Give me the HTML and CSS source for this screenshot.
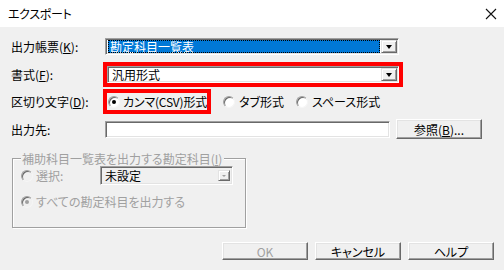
FILE: index.html
```html
<!DOCTYPE html>
<html lang="ja">
<head>
<meta charset="utf-8">
<link rel="stylesheet" href="styles.css">
</head>
<body>
<div class="window">
  <div class="titlebar">
    <span class="title">エクスポート</span>
    <svg class="close" width="12" height="12" viewBox="0 0 12 12"><path d="M1 1 L11 11 M11 1 L1 11" stroke="#111" stroke-width="1.1" fill="none"/></svg>
  </div>
  <div class="content">
    <div class="row r1">
      <span class="label">出力帳票(<u>K</u>):</span>
      <div class="combo c1">
        <div class="value sel"><span>勘定科目一覧表</span></div>
        <div class="ddbtn"><span class="tri"></span></div>
      </div>
    </div>
    <div class="row r2">
      <span class="label">書式(<u>F</u>):</span>
      <div class="hl hl-combo">
        <div class="combo c2">
          <div class="value"><span>汎用形式</span></div>
          <div class="ddbtn"><span class="tri"></span></div>
        </div>
      </div>
    </div>
    <div class="row r3">
      <span class="label">区切り文字(<u>D</u>):</span>
      <div class="hl hl-radio">
        <span class="radio on"></span><span class="rtext">カンマ(CSV)形式</span>
      </div>
      <span class="radio rb2"></span><span class="rtext">タブ形式</span>
      <span class="radio rb3"></span><span class="rtext">スペース形式</span>
    </div>
    <div class="row r4">
      <span class="label">出力先:</span>
      <div class="input"></div>
      <div class="btn browse">参照(<u>B</u>)...</div>
    </div>
    <div class="group">
      <span class="legend">補助科目一覧表を出力する勘定科目(<u>I</u>)</span>
      <div class="grow g1">
        <span class="radio dis"></span><span class="gtext sel-label">選択:</span>
        <div class="combo c3">
          <div class="value"><span>未設定</span></div>
          <div class="ddbtn small"><span class="tri grey"></span></div>
        </div>
      </div>
      <div class="grow g2">
        <span class="radio dis on"></span><span class="gtext">すべての勘定科目を出力する</span>
      </div>
    </div>
    <div class="buttons">
      <div class="btn disabled">OK</div>
      <div class="btn">キャンセル</div>
      <div class="btn">ヘルプ</div>
    </div>
  </div>
</div>
</body>
</html>
```

FILE: styles.css
```css
* { box-sizing: border-box; }
html, body { margin: 0; padding: 0; }
body {
  width: 504px;
  height: 270px;
  overflow: hidden;
  background: #f0f0f0;
  font-family: "Noto Sans CJK JP", "Noto Sans", sans-serif;
  font-size: 12px;
  line-height: 13px;
  color: #000;
  font-feature-settings: "palt";
  white-space: nowrap;
}
u { text-decoration: underline; text-underline-offset: 1px; }
.window { width: 504px; height: 270px; }
.titlebar {
  height: 27px;
  background: #fff;
  display: flex;
  align-items: center;
  justify-content: space-between;
  padding: 0 7px 0 8px;
}
.title { font-size: 12px; letter-spacing: -0.3px; }
.close { display: block; }
.content {
  padding-left: 11px;
  display: flex;
  flex-direction: column;
}
.row { display: flex; align-items: center; }
.label { width: 94px; flex: none; }
.r1 { margin-top: 11px; height: 17px; }
.r2 { margin-top: 7px; height: 25px; }
.r3 { margin-top: 2px; height: 25px; }
.r4 { margin-top: 5px; height: 20px; }

.combo {
  display: flex;
  height: 17px;
  border: 1px solid;
  border-color: #a0a0a0 #fff #fff #a0a0a0;
  box-shadow: inset 1px 1px 0 #696969, inset -1px -1px 0 #e3e3e3;
  background: #fff;
  padding: 2px 2px 2px 2px;
}
.c1 { width: 294px; }
.c2 { width: 292px; }
.value { flex: 1; display: flex; align-items: center; padding-left: 2px; }
.value.sel {
  background: #0078d7;
  color: #fff;
  outline: 1px dotted #000;
  outline-offset: -1px;
  margin: -1px 1px -1px 0;
}
.ddbtn {
  width: 16px;
  margin: -1px -1px -1px 0;
  background: #f0f0f0;
  border: 1px solid;
  border-color: #e3e3e3 #696969 #696969 #e3e3e3;
  box-shadow: inset 1px 1px 0 #fff, inset -1px -1px 0 #a0a0a0;
  display: flex;
  align-items: center;
  justify-content: center;
}
.tri {
  width: 0; height: 0;
  border-left: 3.5px solid transparent;
  border-right: 3.5px solid transparent;
  border-top: 4px solid #000;
  margin-top: 1px;
}
.tri.grey { border-left-width: 2px; border-right-width: 2px; border-top: 2px solid #a0a0a0; }

.hl { border: 4px solid #ff0000; margin-left: -2px; flex: none; }
.hl-combo { width: 300px; height: 25px; }
.hl-radio { width: 108px; height: 25px; display: flex; align-items: center; padding-left: 1px; overflow: hidden; }
.hl-radio .rtext { letter-spacing: -0.2px; margin-left: 3px; }

.radio {
  width: 12px; height: 12px; flex: none;
  border-radius: 50%;
  background: #fff;
  border: 1px solid;
  border-color: #a0a0a0 #f5f5f5 #f5f5f5 #a0a0a0;
  box-shadow: inset 1px 1px 0 #696969;
  position: relative;
}
.radio.on::after {
  content: "";
  position: absolute;
  left: 3px; top: 3px;
  width: 4px; height: 4px;
  border-radius: 50%;
  background: #000;
}
.radio.dis { background: #f0f0f0; }
.radio.dis.on::after { background: #a0a0a0; }
.rtext { margin-left: 4px; }
.rb2 { margin-left: 12px; }
.rb3 { margin-left: 12px; }

.input {
  width: 285px; height: 17px;
  background: #fff;
  border: 1px solid;
  border-color: #a0a0a0 #fff #fff #a0a0a0;
  box-shadow: inset 1px 1px 0 #696969, inset -1px -1px 0 #e3e3e3;
}
.btn {
  width: 86px;
  height: 18px;
  display: flex;
  align-items: center;
  justify-content: center;
  background: #f0f0f0;
  border: 1px solid;
  border-color: #fff #696969 #696969 #fff;
  box-shadow: inset -1px -1px 0 #a0a0a0, inset 1px 1px 0 #e3e3e3;
}
.browse { height: 20px; margin-left: 6px; }
.btn.disabled { color: #a0a0a0; }

.group {
  margin: 19px 0 0 1px;
  width: 234px;
  height: 70px;
  border: 1px solid #a0a0a0;
  box-shadow: 1px 1px 0 #fff, inset 1px 1px 0 #fff;
  color: #a0a0a0;
  display: flex;
  flex-direction: column;
}
.legend {
  align-self: flex-start;
  margin: -7px 0 0 8px;
  padding: 0 2px 0 1px;
  background: #f0f0f0;
  line-height: 13px;
}
.grow { display: flex; align-items: center; }
.g1 { margin-top: 1px; height: 19px; padding-left: 8px; }
.g2 { margin-top: 10px; height: 13px; padding-left: 8px; }
.gtext { margin-left: 3px; }
.sel-label { width: 64px; }
.c3 {
  width: 133px; height: 19px;
  background: #f0f0f0;
  color: #000;
}
.ddbtn.small { width: 12px; margin: 1px 0 1px 0; }

.buttons {
  display: flex;
  justify-content: flex-end;
  gap: 7px;
  margin-top: 14px;
  padding-right: 10px;
}
```
